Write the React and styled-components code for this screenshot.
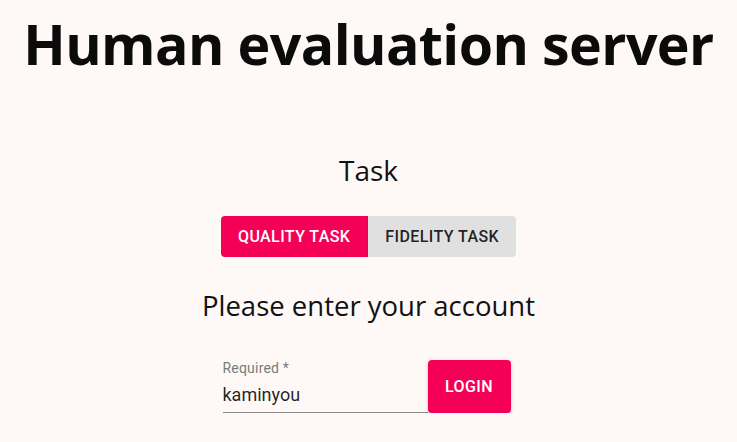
import { useState } from 'react';
import styled, { createGlobalStyle } from 'styled-components';

const GlobalStyle = createGlobalStyle`
  html, body {
    margin: 0;
    padding: 0;
    background-color: #fef9f7;
  }
  body {
    font-family: "Open Sans", "Noto Sans", sans-serif;
  }
`;

const Page = styled.div`
  display: flex;
  flex-direction: column;
  align-items: center;
  padding-top: 6px;
`;

const Title = styled.h1`
  margin: 0;
  font-family: "Open Sans", "Noto Sans", sans-serif;
  font-size: 55.5px;
  font-weight: 700;
  line-height: 76px;
  letter-spacing: -0.6px;
  color: #0b0b0b;
`;

const Heading = styled.h2`
  margin: ${props => props.$margin || '0'};
  font-family: "Open Sans", "Noto Sans", sans-serif;
  font-size: ${props => props.$size || '28px'};
  font-weight: 400;
  line-height: 40px;
  color: #111;
`;

const ToggleGroup = styled.div`
  display: flex;
  border-radius: 4px;
  overflow: hidden;
  margin-top: 26px;
`;

const ToggleButton = styled.button`
  height: 41px;
  padding: 0 17px;
  border: none;
  border-left: ${props => props.$divider ? '1px solid #3949ab' : 'none'};
  background-color: ${props => props.$active ? '#f50057' : '#e0e0e0'};
  color: ${props => props.$active ? '#fff' : 'rgba(0, 0, 0, 0.87)'};
  font-family: Roboto, "Liberation Sans", sans-serif;
  font-size: 16px;
  font-weight: 500;
  letter-spacing: 0.4px;
  text-transform: uppercase;
  cursor: pointer;
`;

const FormRow = styled.form`
  display: flex;
  align-items: flex-end;
  margin-top: 34px;
  margin-right: 4px;
`;

const Field = styled.label`
  display: flex;
  flex-direction: column;
  width: 205px;
  border-bottom: 1px solid #8a8a8a;
  padding-bottom: 5px;
`;

const FieldLabel = styled.span`
  font-family: Roboto, "Liberation Sans", sans-serif;
  font-size: 14px;
  line-height: 16px;
  color: #7b7b7b;
  letter-spacing: 0.2px;
`;

const Input = styled.input`
  margin-top: 7px;
  border: none;
  outline: none;
  background: transparent;
  padding: 0;
  font-family: Roboto, "Liberation Sans", sans-serif;
  font-size: 18px;
  line-height: 24px;
  color: rgba(0, 0, 0, 0.87);
`;

const LoginButton = styled.button`
  width: 83px;
  height: 53px;
  border: none;
  border-radius: 4px;
  background-color: #f50057;
  color: #fff;
  font-family: Roboto, "Liberation Sans", sans-serif;
  font-size: 16px;
  font-weight: 500;
  letter-spacing: 0.4px;
  text-transform: uppercase;
  box-shadow: 0 3px 1px -2px rgba(0,0,0,0.2), 0 2px 2px 0 rgba(0,0,0,0.14), 0 1px 5px 0 rgba(0,0,0,0.12);
  cursor: pointer;
`;

const App = () => {
  const [task, setTask] = useState('quality');
  const [account, setAccount] = useState('kaminyou');

  return (
    <Page>
      <GlobalStyle />
      <Title>Human evaluation server</Title>
      <Heading $margin="68px 0 0">Task</Heading>
      <ToggleGroup>
        <ToggleButton $active={task === 'quality'} onClick={() => setTask('quality')}>
          Quality Task
        </ToggleButton>
        <ToggleButton $divider $active={task === 'fidelity'} onClick={() => setTask('fidelity')}>
          Fidelity Task
        </ToggleButton>
      </ToggleGroup>
      <Heading $margin="29px 0 0" $size="27.5px">Please enter your account</Heading>
      <FormRow onSubmit={e => e.preventDefault()}>
        <Field>
          <FieldLabel>Required *</FieldLabel>
          <Input value={account} onChange={e => setAccount(e.target.value)} />
        </Field>
        <LoginButton type="submit">Login</LoginButton>
      </FormRow>
    </Page>
  );
};

export default App;
